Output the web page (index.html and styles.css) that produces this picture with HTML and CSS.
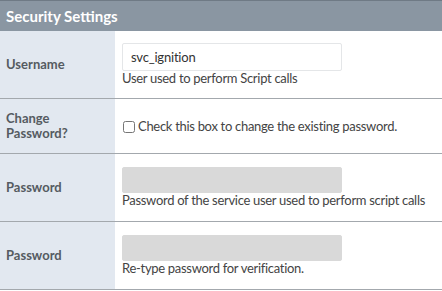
FILE: index.html
```html
<!DOCTYPE html>
<html lang="en">
<head>
  <meta charset="UTF-8">
  <title>Security Settings</title>
  <link rel="stylesheet" href="styles.css">
</head>
<body>
  <div class="settings">
    <div class="settings-header">Security Settings</div>

    <!-- Username -->
    <div class="settings-row">
      <div class="row-label">Username</div>
      <div class="row-field">
        <input type="text" class="text-input" value="svc_ignition">
        <div class="hint">User used to perform Script calls</div>
      </div>
    </div>

    <!-- Change password toggle -->
    <div class="settings-row row-check">
      <div class="row-label">Change<br>Password?</div>
      <div class="row-field">
        <label class="check-label"><input type="checkbox" class="check-box">Check this box to change the existing password.</label>
      </div>
    </div>

    <!-- Password -->
    <div class="settings-row">
      <div class="row-label">Password</div>
      <div class="row-field">
        <input type="password" class="text-input" disabled>
        <div class="hint">Password of the service user used to perform script calls</div>
      </div>
    </div>

    <!-- Password again -->
    <div class="settings-row">
      <div class="row-label">Password</div>
      <div class="row-field">
        <input type="password" class="text-input" disabled>
        <div class="hint">Re-type password for verification.</div>
      </div>
    </div>
  </div>
</body>
</html>
```

FILE: styles.css
```css
/* Reset default styles */
* {
  margin: 0;
  padding: 0;
  box-sizing: border-box;
  font-family: Lato, "Liberation Sans", sans-serif;
}

body {
  background: #fff;
}

.settings {
  width: 442px;
}

.settings-header {
  height: 31px;
  border-top: 1px solid #6f7a85;
  background: #8a96a2;
  color: #fff;
  font-size: 15px;
  font-weight: bold;
  padding-left: 6px;
  line-height: 30px;
}

.settings-row {
  display: grid;
  grid-template-columns: 115px 1fr;
  border-bottom: 1px solid #a3a8ad;
  min-height: 68px;
}

.settings-row.row-check {
  min-height: 55px;
}

.row-label {
  background: #e2e8f0;
  color: #555b61;
  font-size: 13px;
  font-weight: bold;
  line-height: 15px;
  padding-left: 6px;
  display: flex;
  align-items: center;
}

.row-field {
  padding-left: 7px;
  display: flex;
  flex-direction: column;
  justify-content: center;
}

.text-input {
  width: 220px;
  height: 28px;
  border: 1px solid #e4e6e8;
  border-radius: 2px;
  padding: 0 8px;
  font-size: 13px;
  letter-spacing: -0.2px;
  color: #333;
  background: #fff;
}

.text-input:disabled {
  height: 26px;
  background: #d9d9d9;
  border-color: #d9d9d9;
}

.hint {
  font-size: 13px;
  line-height: 15px;
  letter-spacing: -0.3px;
  color: #444;
  white-space: nowrap;
}

.check-label {
  display: flex;
  align-items: center;
  font-size: 13px;
  letter-spacing: -0.3px;
  color: #444;
}

.check-box {
  width: 12px;
  height: 12px;
  margin: 2px 3px 0 1px;
}
```
